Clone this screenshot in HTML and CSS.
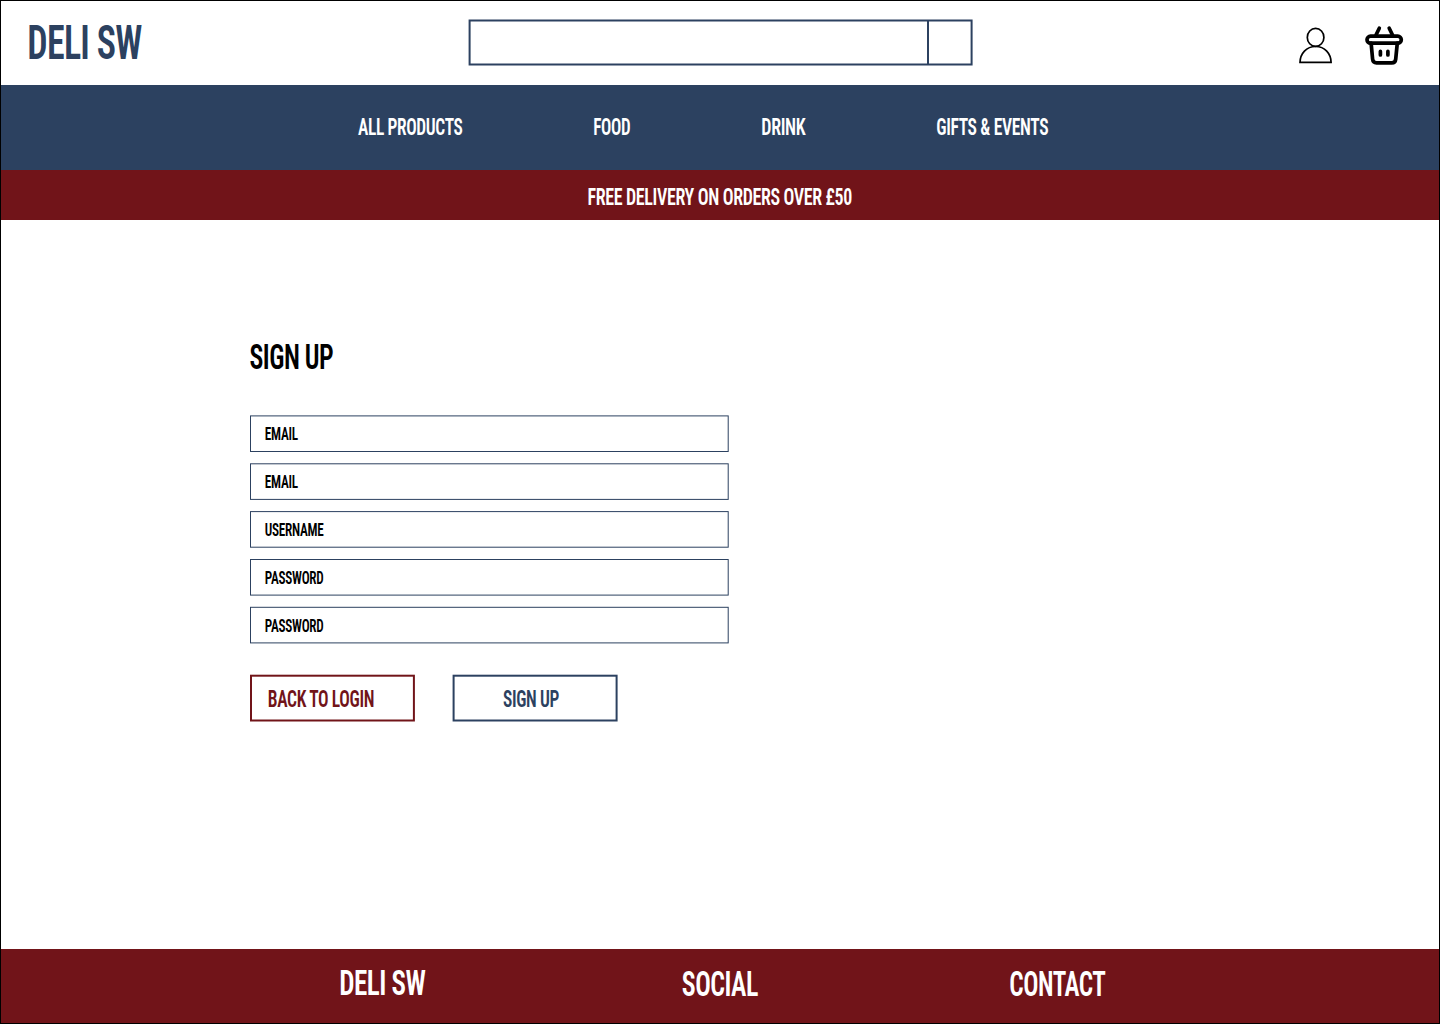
FILE: index.html
```html
<!DOCTYPE html>
<html lang="en">
<head>
<meta charset="utf-8">
<title>Deli SW - Sign up</title>
<link rel="stylesheet" href="styles.css">
</head>
<body>
<div class="page">
  <header class="header">
    <a class="logo"><svg class="label size-xl" width="114" height="34"><text x="-1.7" y="34" textLength="114.3" lengthAdjust="spacingAndGlyphs">DELI SW</text></svg></a>
    <svg class="search" width="505" height="48" role="search">
      <rect x="1.6" y="1.5" width="502" height="44"/>
      <path d="M460 1.5V45.5"/>
    </svg>
    <div class="actions">
      <svg class="user" width="34" height="38" viewBox="0 0 34 38">
        <ellipse cx="16.6" cy="11.4" rx="8.3" ry="9"/>
        <path d="M1 36.4C1.2 27.5 7.4 20.5 16.6 20.5S31.9 27.5 32.1 36.4Z"/>
      </svg>
      <svg class="basket" width="40" height="40" viewBox="0 0 40 40">
        <path d="M15.3 3.2L12 10M25.2 3.2L28.5 10"/>
        <rect x="3" y="11.2" width="34.3" height="7" rx="3.5"/>
        <path d="M7.1 18L8.6 34.2Q9 37.9 12.5 37.9H27.8Q31.3 37.9 31.7 34.2L33.3 18"/>
        <path d="M16.4 26.4V30M23.9 26.4V30"/>
      </svg>
    </div>
  </header>
  <nav class="nav">
    <svg class="label size-m" width="105" height="17"><text x="0" y="17" textLength="104.5" lengthAdjust="spacingAndGlyphs">ALL PRODUCTS</text></svg>
    <svg class="label size-m" width="37" height="17"><text x="-.7" y="17" textLength="37" lengthAdjust="spacingAndGlyphs">FOOD</text></svg>
    <svg class="label size-m" width="44" height="17"><text x="-.7" y="17" textLength="44" lengthAdjust="spacingAndGlyphs">DRINK</text></svg>
    <svg class="label size-m" width="112" height="17"><text x="-.8" y="17" textLength="112" lengthAdjust="spacingAndGlyphs">GIFTS &amp; EVENTS</text></svg>
  </nav>
  <div class="banner">
    <svg class="label size-m" width="264" height="17"><text x="-.5" y="17" textLength="264.5" lengthAdjust="spacingAndGlyphs">FREE DELIVERY ON ORDERS OVER £50</text></svg>
  </div>
  <main class="main">
    <svg class="label size-l" width="83" height="25"><text x="-.5" y="25.3" textLength="83.7" lengthAdjust="spacingAndGlyphs">SIGN UP</text></svg>
    <div class="fields">
      <svg class="field size-s" width="480" height="48"><rect x=".5" y=".9" width="477.7" height="35.6"/><text x="14.8" y="25.3" textLength="33" lengthAdjust="spacingAndGlyphs">EMAIL</text></svg>
      <svg class="field size-s" width="480" height="48"><rect x=".5" y=".8" width="477.7" height="35.6"/><text x="14.8" y="25.1" textLength="33" lengthAdjust="spacingAndGlyphs">EMAIL</text></svg>
      <svg class="field size-s" width="480" height="47"><rect x=".5" y=".6" width="477.7" height="35.6"/><text x="14.8" y="25" textLength="58.8" lengthAdjust="spacingAndGlyphs">USERNAME</text></svg>
      <svg class="field size-s" width="480" height="48"><rect x=".5" y="1.5" width="477.7" height="35.6"/><text x="14.8" y="25.9" textLength="58.7" lengthAdjust="spacingAndGlyphs">PASSWORD</text></svg>
      <svg class="field size-s" width="480" height="39"><rect x=".5" y="1.3" width="477.7" height="35.6"/><text x="14.8" y="25.8" textLength="58.7" lengthAdjust="spacingAndGlyphs">PASSWORD</text></svg>
    </div>
    <div class="buttons">
      <svg class="button back size-m" width="166" height="48"><rect x="1" y="1.7" width="162.9" height="44.8"/><text x="17.8" y="33.2" textLength="106.3" lengthAdjust="spacingAndGlyphs">BACK TO LOGIN</text></svg>
      <svg class="button size-m" width="166" height="48"><rect x="1.6" y="1.7" width="163" height="44.8"/><text x="51" y="33.2" textLength="56" lengthAdjust="spacingAndGlyphs">SIGN UP</text></svg>
    </div>
  </main>
  <footer class="footer">
    <svg class="label size-l" width="85" height="25"><text x="-.8" y="24.5" textLength="86" lengthAdjust="spacingAndGlyphs">DELI SW</text></svg>
    <svg class="label size-l" width="75" height="25"><text x=".8" y="25.5" textLength="76" lengthAdjust="spacingAndGlyphs">SOCIAL</text></svg>
    <svg class="label size-l" width="96" height="25"><text x="-2.7" y="25.5" textLength="96" lengthAdjust="spacingAndGlyphs">CONTACT</text></svg>
  </footer>
</div>
</body>
</html>
```
FILE: styles.css
```css
* { box-sizing: border-box; }

body {
  margin: 0;
  font-family: Roboto, "Liberation Sans", sans-serif;
  font-weight: 650;
  font-stretch: 75%;
}

svg { display: block; flex: none; overflow: visible; }
text { letter-spacing: -.02em; }

.page {
  display: flex;
  flex-direction: column;
  width: 1440px;
  height: 1024px;
  border: 1px solid #000;
  background: #fff;
}

.label { fill: #fff; }
.size-s { font-size: 17.7px; }
.size-m { font-size: 23.9px; }
.size-l { font-size: 35.8px; }
.size-xl { font-size: 47.5px; }

.header {
  display: flex;
  height: 84px;
  padding: 18px 35px 0 28px;
}
.logo { padding-top: 6px; }
.logo .label { fill: #2c4160; }
.search { margin-left: 325px; fill: none; stroke: #2c4160; stroke-width: 2; }
.actions { display: flex; gap: 31px; margin-left: auto; padding-top: 6px; }
.user { margin-top: 1px; fill: none; stroke: #000; stroke-width: 1.7; }
.basket { fill: none; stroke: #000; stroke-width: 3.7; stroke-linecap: round; }

.nav {
  display: flex;
  gap: 131px;
  height: 85px;
  padding: 33px 0 0 357px;
  background: #2c4160;
}
.banner {
  display: flex;
  justify-content: center;
  height: 50px;
  padding-top: 18px;
  background: #711419;
}

.main { flex: 1; padding: 124px 0 0 249px; }
.main > .label { fill: #000; }
.fields { margin-top: 46px; }
.field rect { fill: none; stroke: #2c4160; stroke-width: 1; }
.buttons { display: flex; gap: 36px; margin-top: 29px; }
.button { fill: #2c4160; }
.button rect { fill: none; stroke: #2c4160; stroke-width: 2; }
.back { fill: #711419; }
.back rect { stroke: #711419; }

.footer {
  display: flex;
  gap: 256px;
  height: 74px;
  padding: 21px 0 0 339px;
  background: #711419;
}
```
